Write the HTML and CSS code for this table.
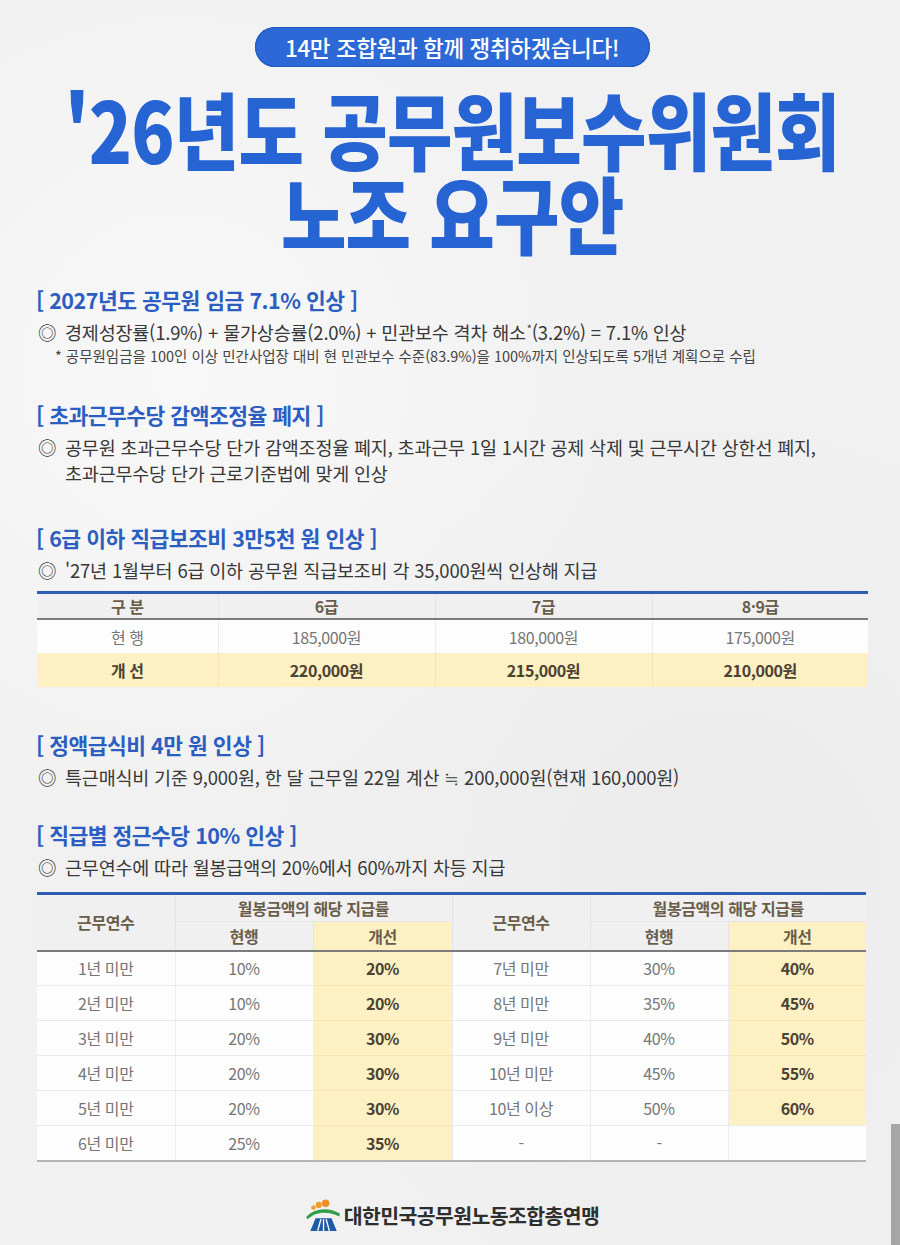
FILE: index.html
```html
<!DOCTYPE html>
<html lang="ko">
<head>
<meta charset="utf-8">
<title>'26년도 공무원보수위원회 노조 요구안</title>
<link rel="stylesheet" href="styles.css">
</head>
<body>
<div class="page">
  <header class="top">
    <div class="pill">14만 조합원과 함께 쟁취하겠습니다!</div>
    <h1 class="title"><span class="tl">'26년도 공무원보수위원회</span><span class="tl">노조 요구안</span></h1>
  </header>

  <section class="sec s1">
    <h2 class="sec-h">[ 2027년도 공무원 임금 7.1% 인상 ]</h2>
    <div class="item"><span class="mark">◎</span><span class="txt">경제성장률(1.9%) + 물가상승률(2.0%) + 민관보수 격차 해소<sup class="ast">*</sup>(3.2%) = 7.1% 인상</span></div>
    <p class="note">* 공무원임금을 100인 이상 민간사업장 대비 현 민관보수 수준(83.9%)을 100%까지 인상되도록 5개년 계획으로 수립</p>
  </section>

  <section class="sec s2">
    <h2 class="sec-h">[ 초과근무수당 감액조정율 폐지 ]</h2>
    <div class="item"><span class="mark">◎</span><span class="txt">공무원 초과근무수당 단가 감액조정율 폐지, 초과근무 1일 1시간 공제 삭제 및 근무시간 상한선 폐지,<br>초과근무수당 단가 근로기준법에 맞게 인상</span></div>
  </section>

  <section class="sec s3">
    <h2 class="sec-h">[ 6급 이하 직급보조비 3만5천 원 인상 ]</h2>
    <div class="item"><span class="mark">◎</span><span class="txt">'27년 1월부터 6급 이하 공무원 직급보조비 각 35,000원씩 인상해 지급</span></div>
    <table class="tbl t1">
      <colgroup><col class="c1"><col class="c2"><col class="c2"><col></colgroup>
      <thead>
        <tr><th>구 분</th><th>6급</th><th>7급</th><th>8·9급</th></tr>
      </thead>
      <tbody>
        <tr><td>현 행</td><td>185,000원</td><td>180,000원</td><td>175,000원</td></tr>
        <tr class="hl"><td>개 선</td><td>220,000원</td><td>215,000원</td><td>210,000원</td></tr>
      </tbody>
    </table>
  </section>

  <section class="sec s4">
    <h2 class="sec-h">[ 정액급식비 4만 원 인상 ]</h2>
    <div class="item"><span class="mark">◎</span><span class="txt">특근매식비 기준 9,000원, 한 달 근무일 22일 계산 ≒ 200,000원(현재 160,000원)</span></div>
  </section>

  <section class="sec s5">
    <h2 class="sec-h">[ 직급별 정근수당 10% 인상 ]</h2>
    <div class="item"><span class="mark">◎</span><span class="txt">근무연수에 따라 월봉급액의 20%에서 60%까지 차등 지급</span></div>
    <table class="tbl t2">
      <colgroup><col><col><col class="w"><col><col><col></colgroup>
      <thead>
        <tr class="h1r"><th rowspan="2">근무연수</th><th colspan="2">월봉금액의 해당 지급률</th><th rowspan="2" class="bl">근무연수</th><th colspan="2">월봉금액의 해당 지급률</th></tr>
        <tr class="h2r"><th>현행</th><th class="y">개선</th><th>현행</th><th class="y">개선</th></tr>
      </thead>
      <tbody>
        <tr><td>1년 미만</td><td>10%</td><td class="y">20%</td><td>7년 미만</td><td>30%</td><td class="y">40%</td></tr>
        <tr><td>2년 미만</td><td>10%</td><td class="y">20%</td><td>8년 미만</td><td>35%</td><td class="y">45%</td></tr>
        <tr><td>3년 미만</td><td>20%</td><td class="y">30%</td><td>9년 미만</td><td>40%</td><td class="y">50%</td></tr>
        <tr><td>4년 미만</td><td>20%</td><td class="y">30%</td><td>10년 미만</td><td>45%</td><td class="y">55%</td></tr>
        <tr><td>5년 미만</td><td>20%</td><td class="y">30%</td><td>10년 이상</td><td>50%</td><td class="y">60%</td></tr>
        <tr><td>6년 미만</td><td>25%</td><td class="y">35%</td><td>-</td><td>-</td><td></td></tr>
      </tbody>
    </table>
  </section>

  <footer class="foot">
    <svg class="logo" width="36" height="34" viewBox="0 0 34 32" aria-hidden="true">
      <circle cx="8" cy="9" r="2.2" fill="#f3a33a"/>
      <circle cx="13" cy="6.5" r="2.9" fill="#f29b2e"/>
      <circle cx="19.5" cy="5" r="3.6" fill="#ef8f26"/>
      <path d="M1 18 C8 9.5 22 8 33 14.5 L32.5 17.5 C22 12 10 12.5 2.5 20 Z" fill="#2f9e48"/>
      <path d="M10 19 L25 19 L30 31 L5 31 Z" fill="#1d5aa8"/>
      <path d="M15 20 L12 31 M17.5 20 L17.5 31 M20 20 L23 31" stroke="#ffffff" stroke-width="1.3"/>
    </svg>
    <span class="org">대한민국공무원노동조합총연맹</span>
  </footer>

  <div class="scroll"></div>
</div>
</body>
</html>
```
FILE: styles.css
```css
* { box-sizing: border-box; }

body {
  margin: 0;
  background: #f1f1f1;
  font-family: "Noto Sans CJK KR", "Noto Sans", sans-serif;
}

.page {
  position: relative;
  width: 900px;
  height: 1245px;
  overflow: hidden;
  padding: 27px 32px 0 36px;
  background:
    radial-gradient(circle at 20% 30%, rgba(255,255,255,0.5), transparent 40%),
    radial-gradient(circle at 80% 70%, rgba(230,230,230,0.5), transparent 45%),
    #f1f1f1;
}

.top {
  display: flex;
  flex-direction: column;
  align-items: center;
}

.pill {
  width: 395px;
  height: 40px;
  border-radius: 20px;
  background: #2c69d6;
  box-shadow: inset 0 0 0 1px #2158bd;
  color: #ffffff;
  font-size: 22.5px;
  font-weight: 500;
  letter-spacing: -0.4px;
  display: flex;
  align-items: center;
  justify-content: center;
}

.title {
  margin: 19px 0 0;
  width: max-content;
  font-size: 84px;
  font-weight: 900;
  line-height: 84px;
  color: #2663d3;
  text-align: center;
  letter-spacing: -1px;
  white-space: nowrap;
  transform: scaleX(0.848);
}

.tl { display: block; }

.sec-h {
  margin: 0;
  font-size: 21.5px;
  font-weight: 700;
  line-height: 30px;
  color: #2c5ec2;
  letter-spacing: -0.5px;
}

.item {
  display: flex;
  margin-top: 4px;
  padding-left: 2px;
  font-size: 18.5px;
  line-height: 26px;
  color: #383838;
  letter-spacing: -0.2px;
}

.mark {
  flex: 0 0 27px;
  letter-spacing: 0;
}

.txt { flex: 1; }

.ast {
  font-size: 11px;
  vertical-align: 7px;
  line-height: 0;
  margin-left: 1px;
}

.note {
  margin: 1px 0 0;
  padding-left: 19px;
  font-size: 14.5px;
  line-height: 20px;
  color: #444444;
  letter-spacing: 0;
}

.s1 { margin-top: 31px; }
.s2 { margin-top: 34px; }
.s3 { margin-top: 37px; }
.s4 { margin-top: 43px; }
.s5 { margin-top: 30px; }

.tbl {
  border-collapse: collapse;
  margin-left: 1px;
  border-top: 3px solid #2f5db4;
  table-layout: fixed;
  font-size: 16px;
  letter-spacing: -0.4px;
}

.tbl th,
.tbl td {
  padding: 0;
  text-align: center;
  vertical-align: middle;
}

.tbl th {
  background: #f0f0f0;
  color: #6a5e4b;
  font-weight: 700;
}

.tbl td {
  background: #fdfdfd;
  color: #767676;
  font-weight: 400;
}

/* table 1 */
.t1 {
  width: 831px;
  margin-top: 8px;
}
.t1 .c1 { width: 181px; }
.t1 .c2 { width: 217px; }
.t1 thead th {
  height: 26px;
  border-bottom: 2px solid #7b7b7b;
  border-left: 1px solid #e6e6e6;
}
.t1 thead th:first-child { border-left: none; }
.t1 td {
  height: 34px;
  border-left: 1px solid #ececec;
}
.t1 td:first-child { border-left: none; }
.t1 tr.hl td {
  background: #fdf0c3;
  color: #4c4233;
  font-weight: 700;
  border-left-color: #f6e6b2;
}

/* table 2 */
.t2 {
  width: 829px;
  margin-top: 12px;
  border-bottom: 2px solid #b4b4b4;
}
.t2 .w { width: 139px; }
.t2 .h1r th {
  height: 28px;
  border-left: 1px solid #e4e4e4;
  border-bottom: 1px solid #e6e6e6;
}
.t2 .h1r th:first-child { border-left: none; }
.t2 .h2r th {
  height: 29px;
  border-left: 1px solid #e4e4e4;
  border-bottom: 2px solid #7b7b7b;
}
.t2 .h1r th[rowspan] { border-bottom: 2px solid #7b7b7b; }
.t2 th.y { background: #fdf0c3; }
.t2 td {
  height: 35px;
  border-left: 1px solid #ececec;
  border-top: 1px solid #eaeaea;
}
.t2 td:first-child { border-left: none; }
.t2 td.y {
  background: #fdf0c3;
  color: #4c4233;
  font-weight: 700;
  border-top-color: #f5e5b4;
}

.foot {
  margin-top: 36px;
  height: 34px;
  display: flex;
  align-items: center;
  justify-content: center;
  gap: 3px;
}

.logo { flex: 0 0 auto; }

.org {
  font-size: 20.5px;
  font-weight: 700;
  color: #2e2e2e;
  letter-spacing: -0.6px;
}

.scroll {
  position: absolute;
  right: 0;
  top: 1124px;
  width: 9px;
  height: 121px;
  background: #a6a6a6;
}
```
